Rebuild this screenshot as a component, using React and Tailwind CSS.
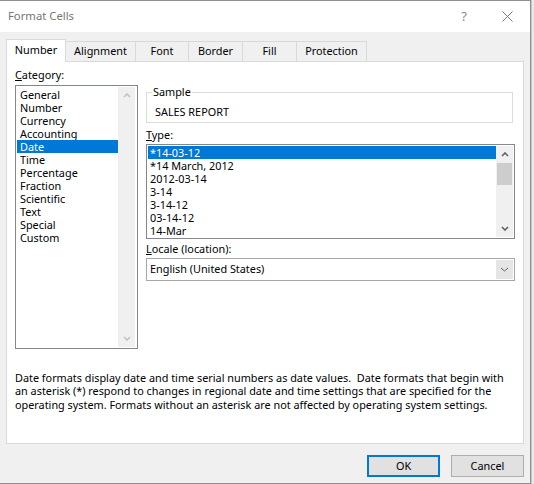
import React from "react";

const F = "font-['Noto_Sans','Segoe_UI',sans-serif]";

function Chevron({ dir = "up", color = "#606060", w = 8, h = 5, sw = 1.6 }) {
  const pts = dir === "up" ? `1,${h - 1} ${w / 2},1 ${w - 1},${h - 1}` : `1,1 ${w / 2},${h - 1} ${w - 1},1`;
  return (
    <svg width={w} height={h} viewBox={`0 0 ${w} ${h}`}>
      <polyline points={pts} fill="none" stroke={color} strokeWidth={sw} />
    </svg>
  );
}

const categories = [
  "General",
  "Number",
  "Currency",
  "Accounting",
  "Date",
  "Time",
  "Percentage",
  "Fraction",
  "Scientific",
  "Text",
  "Special",
  "Custom",
];

const types = ["*14-03-12", "*14 March, 2012", "2012-03-14", "3-14", "3-14-12", "03-14-12", "14-Mar"];

const tabs = [
  { label: "Number", w: "w-[60px]", active: true },
  { label: "Alignment", w: "w-[70px]" },
  { label: "Font", w: "w-[53px]" },
  { label: "Border", w: "w-[54px]" },
  { label: "Fill", w: "w-[54px]" },
  { label: "Protection", w: "w-[70px]" },
];

export default function App() {
  return (
    <div className={`w-[534px] h-[484px] flex bg-[#e9e9e9] text-[10.85px] text-black ${F}`}>
      <div className="w-[531px] h-[484px] flex flex-col border-t border-r border-b border-[#8f8f8f] bg-[#f0f0f0]">
        {/* Title bar */}
        <div className="h-[31px] bg-white flex items-center shrink-0">
          <span className="ml-[8px] text-[11.3px] text-[#767676]">Format Cells</span>
          <span className="ml-auto text-[13px] text-[#8a8a8a] mr-[35px]">?</span>
          <svg width="11" height="11" viewBox="0 0 11 11" className="mr-[17px]">
            <path d="M0.5 0.5 L10.5 10.5 M10.5 0.5 L0.5 10.5" stroke="#7a7a7a" strokeWidth="1" />
          </svg>
        </div>

        {/* Body */}
        <div className="flex-1 flex flex-col px-[6px] pt-[7px]">
          {/* Tabs */}
          <div className="h-[22px] flex items-end shrink-0">
            {tabs.map((t) =>
              t.active ? (
                <div
                  key={t.label}
                  className={`${t.w} h-[23px] -mb-px relative z-10 bg-white border border-b-0 border-[#d9d9d9] flex items-center justify-center pb-[2px]`}
                >
                  {t.label}
                </div>
              ) : (
                <div
                  key={t.label}
                  className={`${t.w} h-[20px] border-t border-r border-[#d9d9d9] bg-[#f0f0f0] flex items-center justify-center`}
                >
                  {t.label}
                </div>
              )
            )}
          </div>

          {/* Panel */}
          <div className="h-[383px] bg-white border border-[#d9d9d9] flex flex-col shrink-0">
            <div className="flex">
              {/* Left column */}
              <div className="ml-[8px] w-[123px] flex flex-col">
                <div className="mt-[6px] leading-[14px]">
                  <span className="underline">C</span>ategory:
                </div>
                <div className="mt-[3px] h-[264px] border border-[#828790] p-[1px] flex">
                  <div className="flex-1 flex flex-col pt-[1px]">
                    {categories.map((c) => (
                      <div
                        key={c}
                        className={`h-[13px] leading-[13px] pl-[3px] ${c === "Date" ? "bg-[#0078d7] text-white" : ""}`}
                      >
                        {c}
                      </div>
                    ))}
                  </div>
                  <div className="w-[17px] bg-[#f0f0f0] flex flex-col items-center justify-between">
                    <div className="h-[17px] flex items-center justify-center">
                      <Chevron dir="up" color="#c3c3c3" />
                    </div>
                    <div className="h-[17px] flex items-center justify-center">
                      <Chevron dir="down" color="#c3c3c3" />
                    </div>
                  </div>
                  <div className="w-[1px]" />
                </div>
              </div>

              {/* Right column */}
              <div className="ml-[8px] w-[369px] flex flex-col">
                <fieldset className="mt-[23px] h-[38px] w-[367px] border border-[#dcdcdc] pl-[5px]">
                  <legend className="leading-[14px] px-[1px]">Sample</legend>
                  <div className="mt-[6px] ml-[3px] leading-[14px]">SALES REPORT</div>
                </fieldset>

                <div className="mt-[5px] leading-[14px]">
                  <span className="underline">T</span>ype:
                </div>
                <div className="mt-[2px] h-[95px] border border-[#828790] p-[1px] flex">
                  <div className="flex-1 flex flex-col">
                    {types.map((t, i) => (
                      <div
                        key={t}
                        className={`h-[13px] leading-[13px] pl-[2px] ${i === 0 ? "bg-[#0078d7] text-white" : ""}`}
                      >
                        {t}
                      </div>
                    ))}
                  </div>
                  <div className="w-[17px] bg-[#f0f0f0] flex flex-col">
                    <div className="h-[17px] flex items-center justify-center">
                      <Chevron dir="up" color="#606060" />
                    </div>
                    <div className="mx-[1px] h-[22px] bg-[#cdcdcd]" />
                    <div className="flex-1" />
                    <div className="h-[17px] flex items-center justify-center">
                      <Chevron dir="down" color="#606060" />
                    </div>
                  </div>
                </div>

                <div className="mt-[3px] leading-[14px]">
                  <span className="underline">L</span>ocale (location):
                </div>
                <div className="mt-[2px] h-[23px] border border-[#a6a6a6] flex items-stretch">
                  <div className="flex-1 flex items-center pl-[3px]">English (United States)</div>
                  <div className="w-[17px] m-[1px] bg-[#e5e5e5] flex items-center justify-center">
                    <Chevron dir="down" color="#606060" w={9} h={5} sw={1} />
                  </div>
                </div>
              </div>
            </div>

            {/* Description */}
            <div className="ml-[8px] mt-[22px] leading-[13.3px] whitespace-pre">
              <div>Date formats display date and time serial numbers as date values.  Date formats that begin with</div>
              <div>an asterisk (*) respond to changes in regional date and time settings that are specified for the</div>
              <div>operating system. Formats without an asterisk are not affected by operating system settings.</div>
            </div>
          </div>

          {/* Buttons */}
          <div className="mt-[11px] flex justify-end gap-[11px]">
            <button className="w-[73px] h-[22px] border-2 border-[#0078d7] bg-[#e1e1e1] flex items-center justify-center">
              OK
            </button>
            <button className="w-[73px] h-[22px] border border-[#adadad] bg-[#e1e1e1] flex items-center justify-center">
              Cancel
            </button>
          </div>
        </div>
      </div>
      <div className="flex-1 border-l border-[#c8c8c8]" />
    </div>
  );
}
